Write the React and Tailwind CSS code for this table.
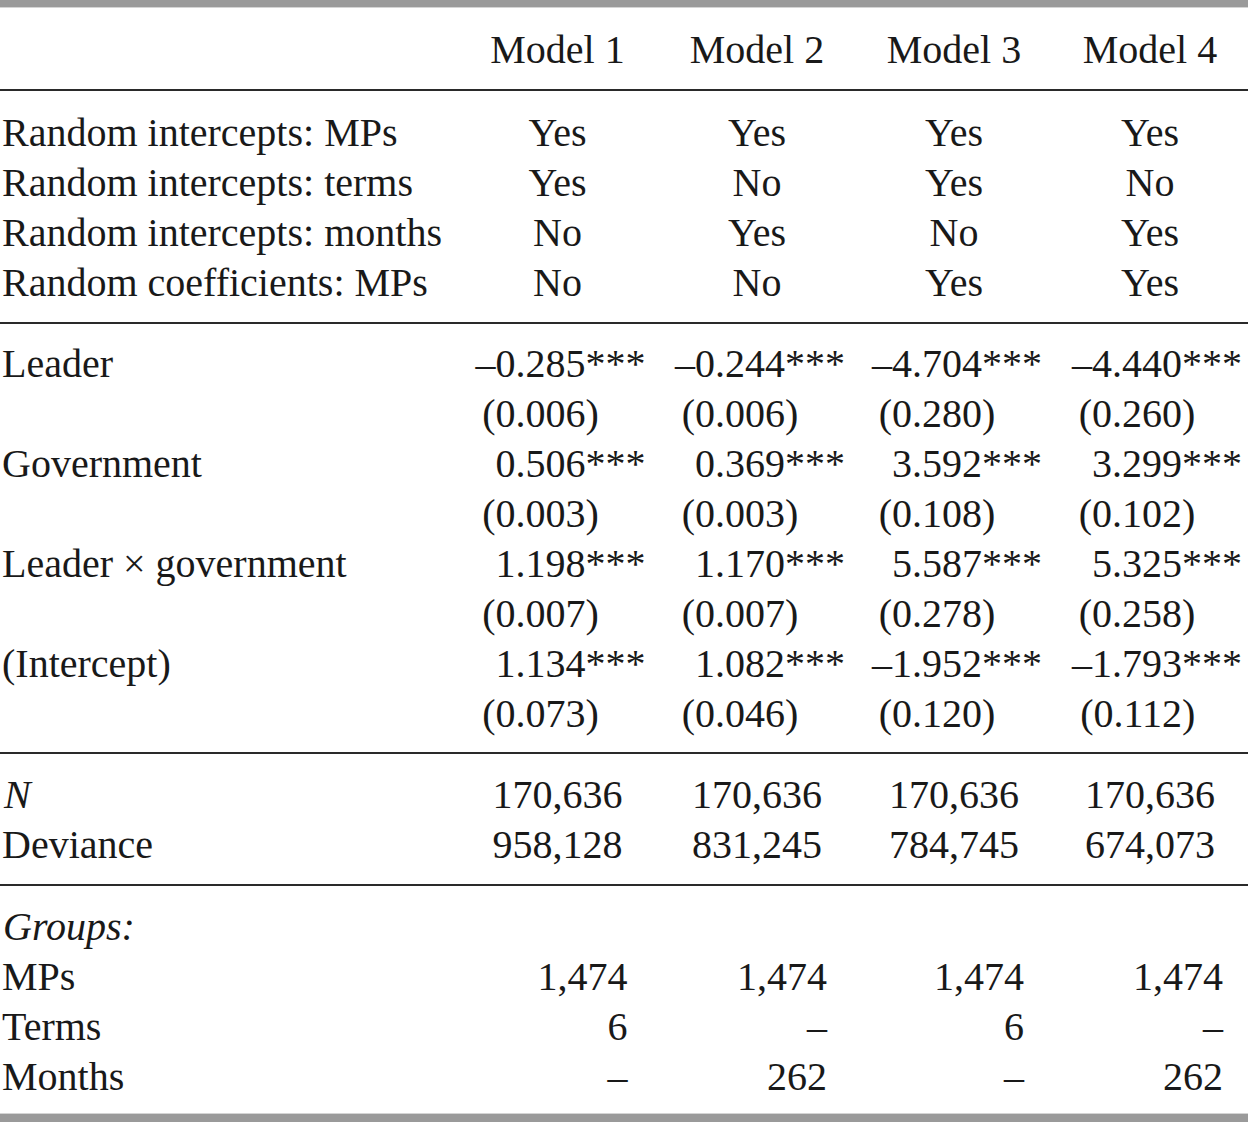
const cols = 'grid grid-cols-[457px_201px_198px_196px_1fr]'

const design = [
  ['Random intercepts: MPs', 'Yes', 'Yes', 'Yes', 'Yes'],
  ['Random intercepts: terms', 'Yes', 'No', 'Yes', 'No'],
  ['Random intercepts: months', 'No', 'Yes', 'No', 'Yes'],
  ['Random coefficients: MPs', 'No', 'No', 'Yes', 'Yes'],
]

const coefs = [
  ['Leader', ['–0.285', '–0.244', '–4.704', '–4.440'], ['0.006', '0.006', '0.280', '0.260']],
  ['Government', ['0.506', '0.369', '3.592', '3.299'], ['0.003', '0.003', '0.108', '0.102']],
  ['Leader × government', ['1.198', '1.170', '5.587', '5.325'], ['0.007', '0.007', '0.278', '0.258']],
  ['(Intercept)', ['1.134', '1.082', '–1.952', '–1.793'], ['0.073', '0.046', '0.120', '0.112']],
]

const groups = [
  ['MPs', '1,474', '1,474', '1,474', '1,474'],
  ['Terms', '6', '–', '6', '–'],
  ['Months', '–', '262', '–', '262'],
]

function Rule() {
  return <div className="h-[2px] bg-[#2a2a2a]" />
}

// decimal-ish alignment: number right-aligned, stars / closing paren hang to the right
function Split({ num, suffix, last }) {
  return (
    <div className={last ? 'flex justify-center pl-[8px]' : 'flex justify-center'}>
      <span className="w-[118px] text-right">{num}</span>
      <span className="w-[62px] text-left">{suffix}</span>
    </div>
  )
}

export default function App() {
  return (
    <div
      className="w-[1248px] h-[1123px] bg-white text-[#191919] text-[40px] leading-[50px]"
      style={{ fontFamily: '"Liberation Serif", "Times New Roman", serif' }}
    >
      <div className="h-[7px] bg-[#9a9a9a] border-b border-[#d4d4d4] box-content" />

      {/* header */}
      <div className={`${cols} pt-[17px] pb-[14px]`}>
        <div />
        {['Model 1', 'Model 2', 'Model 3', 'Model 4'].map(m => (
          <div key={m} className="text-center">{m}</div>
        ))}
      </div>
      <Rule />

      {/* model design */}
      <div className="pt-[17px] pb-[14px]">
        {design.map(r => (
          <div key={r[0]} className={cols}>
            <div className="pl-[2px] whitespace-nowrap">{r[0]}</div>
            {r.slice(1).map((v, i) => (
              <div key={i} className="text-center">{v}</div>
            ))}
          </div>
        ))}
      </div>
      <Rule />

      {/* coefficients */}
      <div className="pt-[15px] pb-[13px]">
        {coefs.map(([label, est, se]) => (
          <div key={label}>
            <div className={cols}>
              <div className="pl-[2px] whitespace-nowrap">{label}</div>
              {est.map((v, i) => <Split key={i} num={v} suffix="***" last={i === 3} />)}
            </div>
            <div className={cols}>
              <div />
              {se.map((v, i) => <Split key={i} num={`(${v}`} suffix=")" last={i === 3} />)}
            </div>
          </div>
        ))}
      </div>
      <Rule />

      {/* fit */}
      <div className="pt-[16px] pb-[14px]">
        <div className={cols}>
          <div className="pl-[4px] italic">N</div>
          {['170,636', '170,636', '170,636', '170,636'].map((v, i) => (
            <div key={i} className="text-center">{v}</div>
          ))}
        </div>
        <div className={cols}>
          <div className="pl-[2px]">Deviance</div>
          {['958,128', '831,245', '784,745', '674,073'].map((v, i) => (
            <div key={i} className="text-center">{v}</div>
          ))}
        </div>
      </div>
      <Rule />

      {/* groups */}
      <div className="pt-[16px] pb-[11px]">
        <div className={cols}>
          <div className="pl-[3px] italic">Groups:</div>
        </div>
        {groups.map(r => (
          <div key={r[0]} className={cols}>
            <div className="pl-[2px]">{r[0]}</div>
            {r.slice(1).map((v, i) => (
              <div key={i} className={i === 3 ? 'flex justify-center pl-[6px]' : 'flex justify-center'}>
                <span className="w-[140px] text-right">{v}</span>
              </div>
            ))}
          </div>
        ))}
      </div>
      <div className="h-[8px] bg-[#9a9a9a] border-t border-[#d4d4d4] box-content" />
    </div>
  )
}
